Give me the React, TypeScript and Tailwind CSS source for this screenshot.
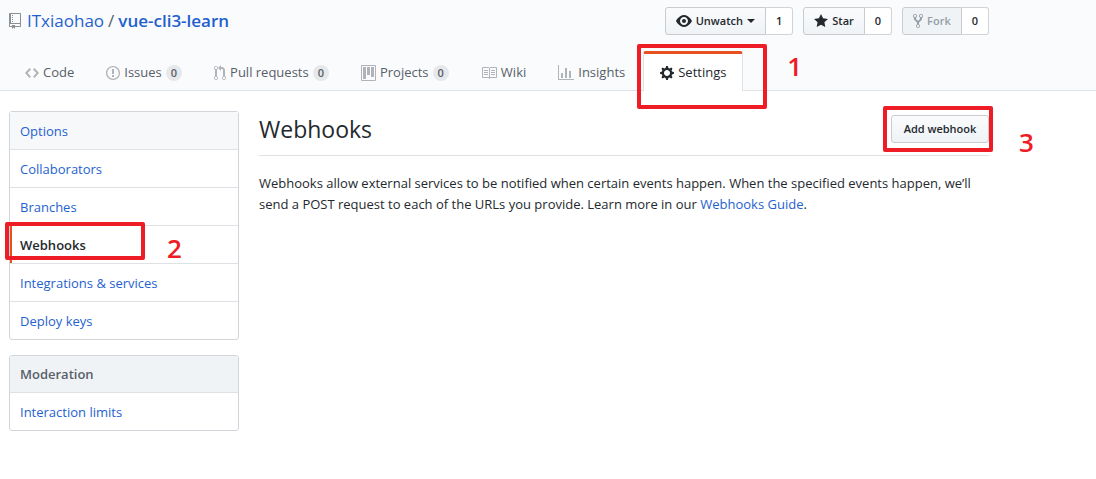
import type { ReactNode } from "react";

type IconShape = { width: number; path: string };

const icons = {
  repo: {
    width: 12,
    path: "M4 9H3V8h1v1zm0-3H3v1h1V6zm0-2H3v1h1V4zm0-2H3v1h1V2zm8-1v12c0 .55-.45 1-1 1H6v2l-1.5-1.5L3 16v-2H1c-.55 0-1-.45-1-1V1c0-.55.45-1 1-1h10c.55 0 1 .45 1 1zm-1 10H1v2h2v-1h3v1h5v-2zm0-10H2v9h9V1z",
  },
  code: {
    width: 14,
    path: "M9.5 3L8 4.5 11.5 8 8 11.5 9.5 13 14 8 9.5 3zm-5 0L0 8l4.5 5L6 11.5 2.5 8 6 4.5 4.5 3z",
  },
  issue: {
    width: 14,
    path: "M7 2.3c3.14 0 5.7 2.56 5.7 5.7s-2.56 5.7-5.7 5.7A5.71 5.71 0 0 1 1.3 8c0-3.14 2.56-5.7 5.7-5.7zM7 1C3.14 1 0 4.14 0 8s3.14 7 7 7 7-3.14 7-7-3.14-7-7-7zm1 3H6v5h2V4zm0 6H6v2h2v-2z",
  },
  pull: {
    width: 12,
    path: "M11 11.28V5c-.03-.78-.34-1.47-.94-2.06C9.46 2.35 8.78 2.03 8 2H7V0L4 3l3 3V4h1c.27.02.48.11.69.31.21.2.3.42.31.69v6.28A1.993 1.993 0 0 0 10 15a1.993 1.993 0 0 0 1-3.72zm-1 2.92c-.66 0-1.2-.55-1.2-1.2 0-.65.55-1.2 1.2-1.2.65 0 1.2.55 1.2 1.2 0 .65-.55 1.2-1.2 1.2zM4 3c0-1.11-.89-2-2-2a1.993 1.993 0 0 0-1 3.72v6.56A1.993 1.993 0 0 0 2 15a1.993 1.993 0 0 0 1-3.72V4.72c.59-.34 1-.98 1-1.72zm-.8 10c0 .66-.55 1.2-1.2 1.2-.65 0-1.2-.55-1.2-1.2 0-.65.55-1.2 1.2-1.2.65 0 1.2.55 1.2 1.2zM2 4.2C1.34 4.2.8 3.65.8 3c0-.65.55-1.2 1.2-1.2.65 0 1.2.55 1.2 1.2 0 .65-.55 1.2-1.2 1.2z",
  },
  project: {
    width: 15,
    path: "M10 12h3V2h-3v10zm-4-2h3V2H6v8zm-4 4h3V2H2v12zm-1 1h13V1H1v14zM14 0H1a1 1 0 0 0-1 1v14a1 1 0 0 0 1 1h13a1 1 0 0 0 1-1V1a1 1 0 0 0-1-1z",
  },
  book: {
    width: 16,
    path: "M3 5h4v1H3V5zm0 3h4V7H3v1zm0 2h4V9H3v1zm11-5h-4v1h4V5zm0 2h-4v1h4V7zm0 2h-4v1h4V9zm2-6v9c0 .55-.45 1-1 1H9.5l-1 1-1-1H2c-.55 0-1-.45-1-1V3c0-.55.45-1 1-1h5.5l1 1 1-1H15c.55 0 1 .45 1 1zm-8 .5L7.5 3H2v9h6V3.5zm7-.5H9.5l-.5.5V12h6V3z",
  },
  graph: {
    width: 16,
    path: "M16 14v1H0V0h1v14h15zM5 13H3V8h2v5zm4 0H7V3h2v10zm4 0h-2V6h2v7z",
  },
  gear: {
    width: 14,
    path: "M14 8.77v-1.6l-1.94-.64-.45-1.09.88-1.84-1.13-1.13-1.81.91-1.09-.45-.69-1.92h-1.6l-.63 1.94-1.11.45-1.84-.88-1.13 1.13.91 1.81-.45 1.09L0 7.23v1.59l1.94.64.45 1.09-.88 1.84 1.13 1.13 1.81-.91 1.09.45.69 1.92h1.59l.63-1.94 1.11-.45 1.84.88 1.13-1.13-.92-1.81.47-1.09L14 8.75v.02zM7 11c-1.66 0-3-1.34-3-3s1.34-3 3-3 3 1.34 3 3-1.34 3-3 3z",
  },
  eye: {
    width: 16,
    path: "M8.06 2C3 2 0 8 0 8s3 6 8.06 6C13 14 16 8 16 8s-3-6-7.94-6zM8 12c-2.2 0-4-1.78-4-4 0-2.2 1.8-4 4-4 2.22 0 4 1.8 4 4 0 2.22-1.78 4-4 4zm2-4c0 1.11-.89 2-2 2-1.11 0-2-.89-2-2 0-1.11.89-2 2-2 1.11 0 2 .89 2 2z",
  },
  star: {
    width: 14,
    path: "M14 6l-4.9-.64L7 1 4.9 5.36 0 6l3.6 3.26L2.67 14 7 11.67 11.33 14l-.93-4.74L14 6z",
  },
  fork: {
    width: 10,
    path: "M8 1a1.993 1.993 0 0 0-1 3.72V6L5 8 3 6V4.72A1.993 1.993 0 0 0 2 1a1.993 1.993 0 0 0-1 3.72V6.5l3 3v1.78A1.993 1.993 0 0 0 5 15a1.993 1.993 0 0 0 1-3.72V9.5l3-3V4.72A1.993 1.993 0 0 0 8 1zM2 4.2C1.34 4.2.8 3.65.8 3c0-.65.55-1.2 1.2-1.2.65 0 1.2.55 1.2 1.2 0 .65-.55 1.2-1.2 1.2zm3 10c-.66 0-1.2-.55-1.2-1.2 0-.65.55-1.2 1.2-1.2.65 0 1.2.55 1.2 1.2 0 .65-.55 1.2-1.2 1.2zm3-10c-.66 0-1.2-.55-1.2-1.2 0-.65.55-1.2 1.2-1.2.65 0 1.2.55 1.2 1.2 0 .65-.55 1.2-1.2 1.2z",
  },
} satisfies Record<string, IconShape>;

type IconName = keyof typeof icons;

function Icon({ name, className = "" }: { name: IconName; className?: string }) {
  const { width, path } = icons[name];
  return (
    <svg
      aria-hidden="true"
      width={width}
      height={16}
      viewBox={`0 0 ${width} 16`}
      fill="currentColor"
      className={`shrink-0 ${className}`}
    >
      <path fillRule="evenodd" d={path} />
    </svg>
  );
}

/** Red frame with a step number, laid over the element it points at. */
function Callout({ step, frame, label }: { step: number; frame: string; label: string }) {
  return (
    <span className={`pointer-events-none absolute z-10 rounded-[2px] border-4 border-[#ee1c25] ${frame}`}>
      <span className={`absolute text-[26px] leading-7 font-semibold text-[#ee1c25] ${label}`}>{step}</span>
    </span>
  );
}

const buttonFace =
  "flex h-7 items-center justify-center gap-1 border border-[#c9cbcf] bg-linear-to-b from-[#fafbfc] to-[#eff3f6] px-[10px] text-[11px] font-semibold";

function SocialButton({
  icon,
  children,
  count,
  caret,
  disabled,
}: {
  icon: IconName;
  children: ReactNode;
  count: number;
  caret?: boolean;
  disabled?: boolean;
}) {
  return (
    <li className="flex">
      <button
        type="button"
        disabled={disabled}
        className={`${buttonFace} rounded-l-[3px] disabled:from-[#eff3f6] disabled:text-[#959da5]`}
      >
        <Icon name={icon} />
        {children}
        {caret && <span className="border-x-4 border-t-4 border-x-transparent border-t-[#24292e]" />}
      </button>
      <a
        href="#count"
        className="flex h-7 items-center rounded-r-[3px] border border-l-0 border-[#d1d3d6] bg-white px-[10px] text-[11px] font-semibold"
      >
        {count}
      </a>
    </li>
  );
}

const tabs: { icon: IconName; label: string; count?: number }[] = [
  { icon: "code", label: "Code" },
  { icon: "issue", label: "Issues", count: 0 },
  { icon: "pull", label: "Pull requests", count: 0 },
  { icon: "project", label: "Projects", count: 0 },
  { icon: "book", label: "Wiki" },
  { icon: "graph", label: "Insights" },
];

const menu = ["Options", "Collaborators", "Branches", "Webhooks", "Integrations & services", "Deploy keys"];

function MenuItem({ label }: { label: string }) {
  const selected = label === "Webhooks";
  const look = selected
    ? "border-l-2 border-l-[#e8501f] pl-2 font-semibold text-[#24292e]"
    : label === "Options"
      ? "bg-[#f6f8fa] pl-[10px] text-[#1f62cf]"
      : "pl-[10px] text-[#1f62cf]";
  return (
    <li className="relative border-b border-[#dfe2e5] last:border-b-0">
      <a
        href="#menu"
        aria-current={selected ? "page" : undefined}
        className={`block pt-[9px] pr-[10px] pb-[7px] leading-[21px] ${look}`}
      >
        {label}
      </a>
      {selected && <Callout step={2} frame="-left-[5px] -top-1 h-[38px] w-[140px]" label="left-[158px] top-2" />}
    </li>
  );
}

export default function App() {
  return (
    <div className="min-h-screen bg-white font-['Open_Sans','Noto_Sans',sans-serif] text-[13px] text-[#24292e]">
      <header className="border-b border-[#dfe2e5] bg-[#fafbfc] pl-[9px]">
        <div className="flex max-w-[980px] items-start justify-between pt-[7px]">
          <h1 className="flex items-center text-[17px] leading-7">
            <Icon name="repo" className="mr-[6px] text-[#8a8f94]" />
            <a href="#owner" className="text-[#1f62cf]">
              ITxiaohao
            </a>
            <span className="mx-1 text-[#586069]">/</span>
            <a href="#repo" className="font-semibold text-[#1f5fcf]">
              vue-cli3-learn
            </a>
          </h1>
          <ul className="flex gap-[10px]">
            <SocialButton icon="eye" count={1} caret>
              Unwatch
            </SocialButton>
            <SocialButton icon="star" count={0}>
              Star
            </SocialButton>
            <SocialButton icon="fork" count={0} disabled>
              Fork
            </SocialButton>
          </ul>
        </div>
        <nav aria-label="Repository" className="-mb-px mt-4 flex">
          {tabs.map((tab) => (
            <a key={tab.label} href="#tab" className="flex h-10 items-center gap-1 px-4 pt-[3px] text-[#586069]">
              <Icon name={tab.icon} className="text-[#b0b3b7]" />
              {tab.label}
              {tab.count !== undefined && (
                <span className="rounded-full bg-[#e6e8eb] px-[5px] text-[11px] leading-4 font-semibold">
                  {tab.count}
                </span>
              )}
            </a>
          ))}
          <a
            href="#settings"
            aria-current="page"
            className="relative ml-[2px] flex h-10 items-center gap-1 rounded-t-[3px] border-x border-t-3 border-x-[#dfe2e5] border-t-[#e8501f] bg-white px-4"
          >
            <Icon name="gear" />
            Settings
            <Callout step={1} frame="-left-[7px] -top-[10px] h-[65px] w-[130px]" label="left-[146px] top-1" />
          </a>
        </nav>
      </header>

      <div className="flex max-w-[989px] items-start gap-5 pt-5 pl-[9px]">
        <aside className="flex w-[230px] shrink-0 flex-col gap-[15px]">
          <ul className="rounded-[3px] border border-[#d1d5da]">
            {menu.map((label) => (
              <MenuItem key={label} label={label} />
            ))}
          </ul>
          <section className="rounded-[3px] border border-[#d1d5da]">
            <h3 className="border-b border-[#dfe2e5] bg-[#f0f3f6] px-[10px] py-2 leading-5 font-semibold text-[#586069]">
              Moderation
            </h3>
            <ul>
              <MenuItem label="Interaction limits" />
            </ul>
          </section>
        </aside>

        <main className="min-w-0 grow">
          <div className="flex items-center justify-between border-b border-[#dfe2e5] pt-1 pb-3">
            <h2 className="text-[23px] leading-7">Webhooks</h2>
            <div className="relative">
              <button type="button" className={`${buttonFace} min-w-[98px] rounded-[3px]`}>
                Add webhook
              </button>
              <Callout step={3} frame="-left-2 -top-[9px] h-[46px] w-[110px]" label="left-[132px] top-[18px]" />
            </div>
          </div>
          <p className="mt-[17px] leading-[21px]">
            Webhooks allow external services to be notified when certain events happen. When the specified events happen,
            we’ll send a POST request to each of the URLs you provide. Learn more in our{" "}
            <a href="#guide" className="text-[#1f62cf]">
              Webhooks Guide
            </a>
            .
          </p>
        </main>
      </div>
    </div>
  );
}
